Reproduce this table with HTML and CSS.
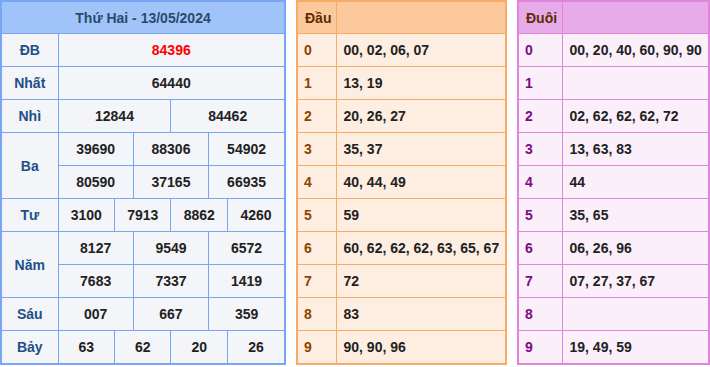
FILE: index.html
```html
<!DOCTYPE html>
<html lang="vi">
<head>
<meta charset="utf-8">
<title>Kết quả xổ số</title>
<link rel="stylesheet" href="styles.css">
</head>
<body>
<div class="wrap">
  <div class="card card-kq">
    <table class="kq">
      <colgroup>
        <col class="c-label">
        <col><col><col><col><col><col><col><col><col><col><col><col>
      </colgroup>
      <thead>
        <tr><th colspan="13" class="title">Thứ Hai - 13/05/2024</th></tr>
      </thead>
      <tbody>
        <tr><td class="lbl">ĐB</td><td colspan="12" class="db">84396</td></tr>
        <tr><td class="lbl">Nhất</td><td colspan="12">64440</td></tr>
        <tr><td class="lbl">Nhì</td><td colspan="6">12844</td><td colspan="6">84462</td></tr>
        <tr><td class="lbl" rowspan="2">Ba</td><td colspan="4">39690</td><td colspan="4">88306</td><td colspan="4">54902</td></tr>
        <tr><td colspan="4">80590</td><td colspan="4">37165</td><td colspan="4">66935</td></tr>
        <tr><td class="lbl">Tư</td><td colspan="3">3100</td><td colspan="3">7913</td><td colspan="3">8862</td><td colspan="3">4260</td></tr>
        <tr><td class="lbl" rowspan="2">Năm</td><td colspan="4">8127</td><td colspan="4">9549</td><td colspan="4">6572</td></tr>
        <tr><td colspan="4">7683</td><td colspan="4">7337</td><td colspan="4">1419</td></tr>
        <tr><td class="lbl">Sáu</td><td colspan="4">007</td><td colspan="4">667</td><td colspan="4">359</td></tr>
        <tr><td class="lbl">Bảy</td><td colspan="3">63</td><td colspan="3">62</td><td colspan="3">20</td><td colspan="3">26</td></tr>
      </tbody>
    </table>
  </div>

  <div class="card card-dau">
    <table class="lt">
      <colgroup><col class="c-dau"><col></colgroup>
      <thead><tr><th>Đầu</th><th></th></tr></thead>
      <tbody>
        <tr><td class="k">0</td><td>00, 02, 06, 07</td></tr>
        <tr><td class="k">1</td><td>13, 19</td></tr>
        <tr><td class="k">2</td><td>20, 26, 27</td></tr>
        <tr><td class="k">3</td><td>35, 37</td></tr>
        <tr><td class="k">4</td><td>40, 44, 49</td></tr>
        <tr><td class="k">5</td><td>59</td></tr>
        <tr><td class="k">6</td><td>60, 62, 62, 62, 63, 65, 67</td></tr>
        <tr><td class="k">7</td><td>72</td></tr>
        <tr><td class="k">8</td><td>83</td></tr>
        <tr><td class="k">9</td><td>90, 90, 96</td></tr>
      </tbody>
    </table>
  </div>

  <div class="card card-duoi">
    <table class="lt">
      <colgroup><col class="c-duoi"><col></colgroup>
      <thead><tr><th>Đuôi</th><th></th></tr></thead>
      <tbody>
        <tr><td class="k">0</td><td>00, 20, 40, 60, 90, 90</td></tr>
        <tr><td class="k">1</td><td></td></tr>
        <tr><td class="k">2</td><td>02, 62, 62, 62, 72</td></tr>
        <tr><td class="k">3</td><td>13, 63, 83</td></tr>
        <tr><td class="k">4</td><td>44</td></tr>
        <tr><td class="k">5</td><td>35, 65</td></tr>
        <tr><td class="k">6</td><td>06, 26, 96</td></tr>
        <tr><td class="k">7</td><td>07, 27, 37, 67</td></tr>
        <tr><td class="k">8</td><td></td></tr>
        <tr><td class="k">9</td><td>19, 49, 59</td></tr>
      </tbody>
    </table>
  </div>
</div>
</body>
</html>
```

FILE: styles.css
```css
html, body {
  margin: 0;
  padding: 0;
  background: #ffffff;
}

body {
  font-family: "Liberation Sans", Arial, sans-serif;
  font-size: 14px;
  font-weight: bold;
  color: #222222;
}

.wrap {
  display: flex;
  gap: 10px;
  align-items: flex-start;
}

.card {
  border: 2px solid;
  flex: none;
}

.card table {
  width: 100%;
  border-collapse: collapse;
  border-style: hidden;
  table-layout: fixed;
}

.card th,
.card td {
  height: 32px;
  padding: 0;
  border: 1px solid;
  vertical-align: middle;
  white-space: nowrap;
}

.card th {
  height: 31px;
}

/* Left: results table */
.card-kq {
  width: 282px;
  border-color: #78a6f3;
  background: #f3f5f9;
}

.kq th,
.kq td {
  border-color: #78a6f3;
  text-align: center;
}

.kq .c-label {
  width: 56px;
}

.kq .title {
  background: #a0c4fa;
  color: #2b4a6d;
}

.kq .lbl {
  color: #1d4f88;
}

.kq .db {
  color: #ff0000;
}

/* Loto tables */
.lt th,
.lt td {
  text-align: left;
  padding-left: 7px;
}

.lt th {
  color: #5e2c05;
}

.card-dau {
  width: 207px;
  border-color: #f8ab66;
  background: #fdeee1;
}

.card-dau th,
.card-dau td {
  border-color: #f8ab66;
}

.card-dau th {
  background: #fcc99c;
}

.card-dau .c-dau {
  width: 38px;
}

.card-dau .k {
  color: #8c4500;
  padding-left: 6px;
}

.card-duoi {
  width: 189px;
  border-color: #e283dc;
  background: #fbeffa;
}

.card-duoi th,
.card-duoi td {
  border-color: #e283dc;
}

.card-duoi th {
  background: #e6abe8;
}

.card-duoi .c-duoi {
  width: 43px;
}

.card-duoi .k {
  color: #7d0a86;
  padding-left: 6px;
}
```
